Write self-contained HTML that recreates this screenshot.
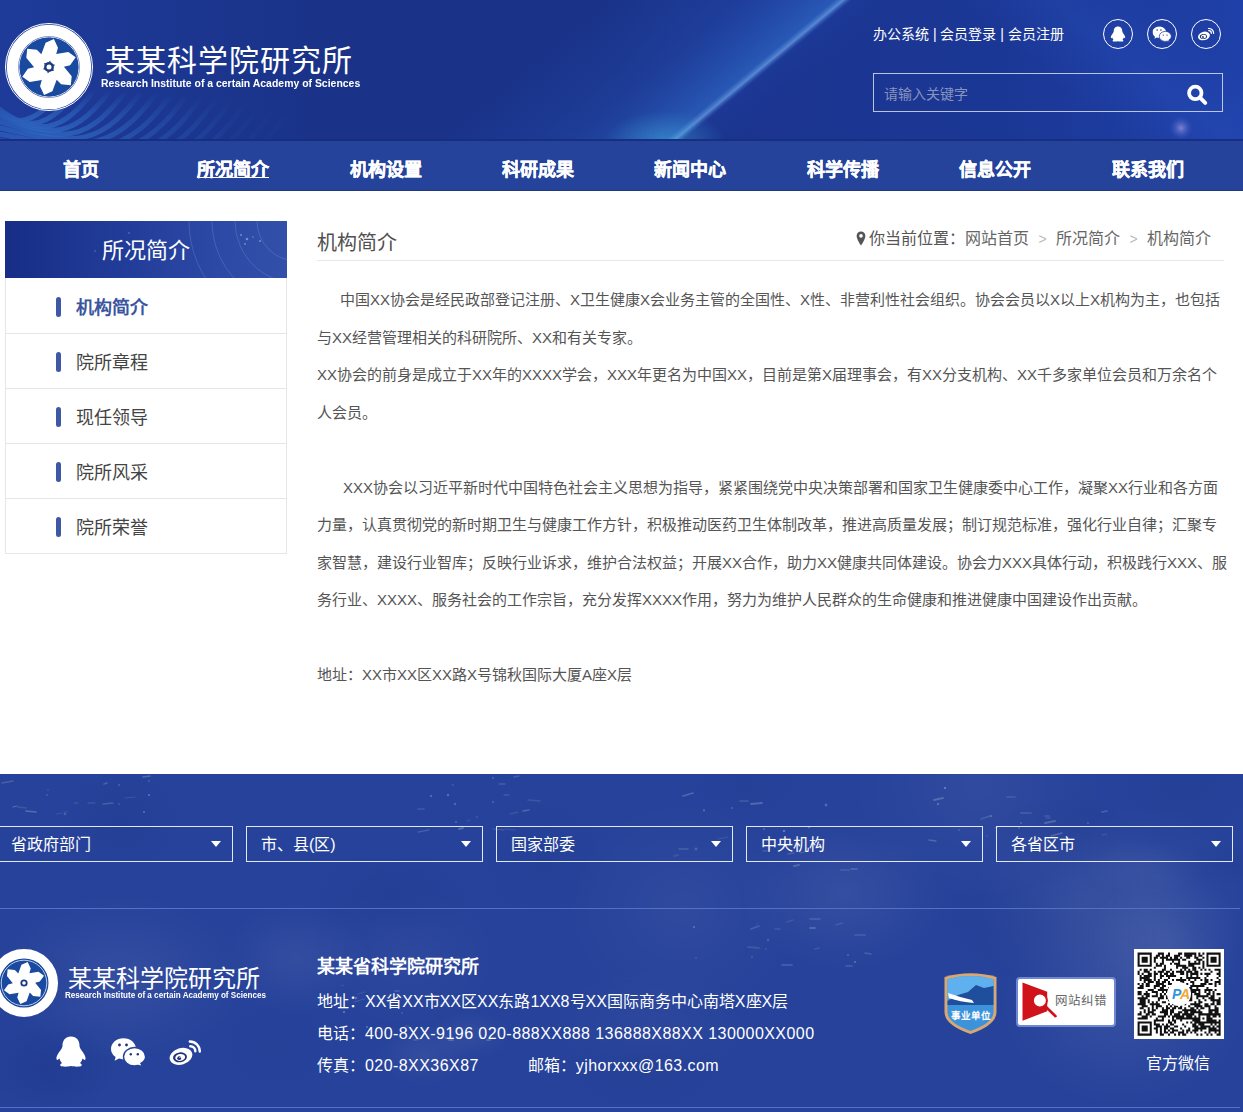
<!DOCTYPE html>
<html lang="zh-CN"><head><meta charset="utf-8">
<style>
*{margin:0;padding:0;box-sizing:border-box}
html,body{width:1243px;height:1112px;overflow:hidden;background:#fff}
body{font-family:"Liberation Sans",sans-serif;position:relative;color:#555}
.abs{position:absolute;white-space:nowrap}
#hdr{position:absolute;left:0;top:0;width:1243px;height:141px;overflow:hidden;background:#1b3591}
#nav{position:absolute;left:0;top:141px;width:1243px;height:50px;background:#25439b;border-bottom:1px solid #21387a}
#nav a{position:absolute;top:6px;-webkit-text-stroke:0.35px #fff;height:46px;line-height:46px;width:152px;text-align:center;color:#fff;font-size:18px;font-weight:bold;text-decoration:none}
#foot{position:absolute;left:0;top:774px;width:1243px;height:338px;background:#26429a;overflow:hidden}
.it{position:absolute;left:0;width:282px;height:55px;border-bottom:1px solid #e6e6e6;line-height:55px}
.it i{position:absolute;left:51px;top:18px;width:5px;height:20px;border-radius:3px;background:#3e58a6}
.it b{position:absolute;left:71px;top:2px;font-weight:normal;font-size:18px;color:#444}
#txt div{white-space:nowrap;height:37.5px}
.sel{position:absolute;top:52px;width:237px;height:36px;border:1.5px solid #e3e8f5;color:#fff;font-size:16px;line-height:35px;padding-left:14px}
.sel i{position:absolute;right:11px;top:14px;width:0;height:0;border-left:5px solid transparent;border-right:5px solid transparent;border-top:6px solid #fff}
.ic{position:absolute;top:19px;width:30px;height:30px;border:1.5px solid #fff;border-radius:50%}
.ic svg{position:absolute;left:50%;top:50%;transform:translate(-50%,-50%)}
</style></head><body>
<svg width="0" height="0" style="position:absolute">
 <defs>
  <symbol id="flower" viewBox="-30 -30 60 60"><path fill="#fff" d="M-7.67,-12.77 L-3.41,-24.26 L4.93,-27.97 L8.96,-19.21 L7.22,-13.03 L19.31,-15.08 L26.69,-9.71 L21.12,-1.85 L14.90,-0.26 L22.72,9.18 L21.76,18.26 L12.16,17.37 L7.67,12.77 L3.41,24.26 L-4.93,27.97 L-8.96,19.21 L-7.22,13.03 L-19.31,15.08 L-26.69,9.71 L-21.12,1.85 L-14.90,0.26 L-22.72,-9.18 L-21.76,-18.26 L-12.16,-17.37Z"/></symbol>
  <g id="qq"><path fill="#fff" d="M15,0.5C9,0.5 6.5,5 6.5,9.5C6.5,11 6,12 5,13.5C3,16.5 0,20 0.5,23C0.8,24.5 2,24 3.5,22.5C4,24.5 5,26 6,27C4.5,27.8 3.8,28.8 4.5,29.8C5.8,31 12,30.8 15,30C18,30.8 24.2,31 25.5,29.8C26.2,28.8 25.5,27.8 24,27C25,26 26,24.5 26.5,22.5C28,24 29.2,24.5 29.5,23C30,20 27,16.5 25,13.5C24,12 23.5,11 23.5,9.5C23.5,5 21,0.5 15,0.5Z"/></g>
  <g id="wx"><path fill="#fff" d="M12.5,0.3C5.6,0.3 0,5 0,10.9C0,14.2 1.8,17.1 4.6,19.1L3.6,22.8L8,20.6C9.4,21.1 10.9,21.4 12.5,21.4C19.4,21.4 25,16.7 25,10.9C25,5 19.4,0.3 12.5,0.3Z"/><path fill="#fff" stroke="#26429a" stroke-width="1.4" d="M23.5,9.5C17.4,9.5 12.5,13.6 12.5,18.7C12.5,23.8 17.4,27.9 23.5,27.9C24.7,27.9 25.8,27.7 26.9,27.4L31.5,28.5L29.9,25.3C32.8,23.6 34.6,21.3 34.6,18.7C34.6,13.6 29.6,9.5 23.5,9.5Z"/><circle cx="8.5" cy="7" r="1.4" fill="#1e3276"/><circle cx="15.5" cy="7" r="1.4" fill="#1e3276"/><circle cx="19.8" cy="16.2" r="1.2" fill="#1e3276"/><circle cx="26.8" cy="16.2" r="1.2" fill="#1e3276"/></g>
  <g id="wb"><ellipse cx="12" cy="16.4" rx="11.6" ry="8.2" transform="rotate(-17 12 16.4)" fill="#fff"/><ellipse cx="11" cy="17.3" rx="7" ry="4.9" transform="rotate(-8 11 17.3)" fill="#1e3276"/><ellipse cx="11.2" cy="17.5" rx="5" ry="3.4" transform="rotate(-8 11 17.3)" fill="#fff"/><circle cx="10.2" cy="18.2" r="1.9" fill="#1e3276"/><circle cx="10.9" cy="17.5" r="0.6" fill="#fff"/><path fill="none" stroke="#fff" stroke-width="2.4" stroke-linecap="round" d="M20.8,1.5A10,10 0 0 1 30.8,11.5M21.3,6.2A5,5 0 0 1 26.3,11.2"/></g>
 </defs>
</svg>

<div id="hdr">
 <svg class="abs" style="left:0;top:0" width="1243" height="141">
  <defs>
   <linearGradient id="hg" x1="0" y1="0" x2="1" y2="0">
    <stop offset="0" stop-color="#1e3b9a"/><stop offset="0.25" stop-color="#1a3389"/><stop offset="0.5" stop-color="#1a3389"/><stop offset="0.62" stop-color="#1b3590"/><stop offset="0.8" stop-color="#1b3795"/><stop offset="1" stop-color="#1f40a8"/>
   </linearGradient>
   <linearGradient id="beam" x1="0" y1="1" x2="1" y2="0">
    <stop offset="0" stop-color="#2a7ad8" stop-opacity="0"/><stop offset="0.45" stop-color="#3d8fe8" stop-opacity="0.55"/><stop offset="0.55" stop-color="#5aaaf0" stop-opacity="0.6"/><stop offset="1" stop-color="#2a6ad0" stop-opacity="0"/>
   </linearGradient>
   <linearGradient id="beam2" gradientUnits="userSpaceOnUse" x1="663" y1="-45" x2="784" y2="101">
    <stop offset="0" stop-color="#2a60d0" stop-opacity="0"/><stop offset="0.45" stop-color="#2f6ad8" stop-opacity="0.18"/><stop offset="0.76" stop-color="#3a88e8" stop-opacity="0.42"/><stop offset="0.79" stop-color="#80c0ff" stop-opacity="0.6"/><stop offset="0.82" stop-color="#2a5ad0" stop-opacity="0.1"/><stop offset="1" stop-color="#2050c0" stop-opacity="0"/>
   </linearGradient>
   <linearGradient id="band" gradientUnits="userSpaceOnUse" x1="1080" y1="-60" x2="1000" y2="40">
    <stop offset="0" stop-color="#3060d8" stop-opacity="0"/><stop offset="0.5" stop-color="#3468e0" stop-opacity="0.14"/><stop offset="1" stop-color="#3060d8" stop-opacity="0"/>
   </linearGradient>
   <radialGradient id="cyan" cx="0.5" cy="0.5" r="0.5"><stop offset="0" stop-color="#40b0e0" stop-opacity="0.45"/><stop offset="1" stop-color="#40b0e0" stop-opacity="0"/></radialGradient>
   <radialGradient id="glow" cx="0.5" cy="0.5" r="0.5"><stop offset="0" stop-color="#b8a8e8" stop-opacity="0.9"/><stop offset="1" stop-color="#4060d0" stop-opacity="0"/></radialGradient>
   <radialGradient id="wmg" cx="0.1" cy="1" r="1"><stop offset="0" stop-color="#fff"/><stop offset="0.6" stop-color="#fff" stop-opacity="0.5"/><stop offset="1" stop-color="#fff" stop-opacity="0"/></radialGradient><mask id="wm"><rect x="0" y="88" width="320" height="53" fill="url(#wmg)"/></mask><linearGradient id="waves" x1="0" y1="0" x2="0" y2="1"><stop offset="0" stop-color="#3b7fd0" stop-opacity="0"/><stop offset="1" stop-color="#4a8ad8" stop-opacity="0.7"/></linearGradient>
  </defs>
  <rect width="1243" height="141" fill="url(#hg)"/>
  <rect width="1243" height="141" fill="url(#beam2)"/>
  <rect width="1243" height="141" fill="url(#band)"/>
  <ellipse cx="665" cy="141" rx="60" ry="30" fill="url(#cyan)"/>
  <circle cx="1181" cy="128" r="12" fill="url(#glow)" opacity="0.7"/>
  <g fill="none" stroke="#3270c8" stroke-width="5" mask="url(#wm)"><path d="M-20,88 C0,113 20,150 70,80" stroke-opacity="1.00"/><path d="M-20,95 C16,120 36,150 86,80" stroke-opacity="0.94"/><path d="M-20,102 C32,127 52,150 102,80" stroke-opacity="0.88"/><path d="M-20,109 C48,134 68,150 118,80" stroke-opacity="0.81"/><path d="M-20,116 C64,141 84,150 134,80" stroke-opacity="0.75"/><path d="M-20,123 C80,148 100,150 150,80" stroke-opacity="0.69"/><path d="M-20,130 C96,155 116,150 166,80" stroke-opacity="0.62"/><path d="M-20,137 C112,162 132,150 182,80" stroke-opacity="0.56"/><path d="M-20,144 C128,169 148,150 198,80" stroke-opacity="0.50"/><path d="M-20,151 C144,176 164,150 214,80" stroke-opacity="0.44"/><path d="M-20,158 C160,183 180,150 230,80" stroke-opacity="0.38"/><path d="M-20,165 C176,190 196,150 246,80" stroke-opacity="0.31"/><path d="M-20,172 C192,197 212,150 262,80" stroke-opacity="0.25"/><path d="M-20,179 C208,204 228,150 278,80" stroke-opacity="0.19"/><path d="M-20,186 C224,211 244,150 294,80" stroke-opacity="0.15"/><path d="M-20,193 C240,218 260,150 310,80" stroke-opacity="0.15"/></g>
 </svg>
 <svg class="abs" style="left:5px;top:23px" width="88" height="88" viewBox="-44 -44 88 88">
  <circle r="43.5" fill="none" stroke="#fff" stroke-width="1"/>
  <circle r="36.5" fill="none" stroke="#fff" stroke-width="11.5"/>
  <circle r="30" fill="#1a4aa0" stroke="#fff" stroke-width="0.8"/>
  <circle r="29.2" fill="#1a4aa0"/>
  <use href="#flower" x="-30" y="-30" width="60" height="60"/>
  <g fill="#1b3a80"><circle r="4.9"/><path d="M0,-6.3L1.3,-4.5L-1.3,-4.5Z" transform="rotate(10)"/><path d="M0,-6.3L1.3,-4.5L-1.3,-4.5Z" transform="rotate(70)"/><path d="M0,-6.3L1.3,-4.5L-1.3,-4.5Z" transform="rotate(130)"/><path d="M0,-6.3L1.3,-4.5L-1.3,-4.5Z" transform="rotate(190)"/><path d="M0,-6.3L1.3,-4.5L-1.3,-4.5Z" transform="rotate(250)"/><path d="M0,-6.3L1.3,-4.5L-1.3,-4.5Z" transform="rotate(310)"/></g><circle r="2.5" fill="#fff"/>
 </svg>
 <div class="abs" style="left:105px;top:43px;font-size:30px;color:#fff;line-height:36px;letter-spacing:1px;font-weight:300">某某科学院研究所</div>
 <div class="abs" style="left:101px;top:76px;font-size:11px;font-weight:bold;color:#fff;line-height:14px;transform-origin:0 0;transform:scaleX(0.95)">Research Institute of a certain Academy of Sciences</div>

 <div class="abs" style="left:873px;top:24px;font-size:14px;color:#fff;line-height:20px">办公系统 | 会员登录 | 会员注册</div>
 <div class="ic" style="left:1103px"><svg width="15" height="17" viewBox="0 0 30 31"><use href="#qq"/></svg></div>
 <div class="ic" style="left:1147px"><svg width="19" height="15.5" viewBox="0 0 35 28.5"><use href="#wx"/></svg></div>
 <div class="ic" style="left:1191px"><svg width="17" height="13" viewBox="0 0 32 25"><use href="#wb"/></svg></div>

 <div class="abs" style="left:873px;top:73px;width:350px;height:39px;border:1px solid rgba(255,255,255,0.7)"></div>
 <div class="abs" style="left:884px;top:84px;font-size:14px;color:#8794bd;line-height:20px">请输入关键字</div>
 <svg class="abs" style="left:1180px;top:78px" width="32" height="32" viewBox="1180 78 32 32"><circle cx="1195.3" cy="92.9" r="6.2" fill="none" stroke="#fff" stroke-width="3.8"/><path d="M1200.5,98.2L1205.2,102.9" stroke="#fff" stroke-width="4" stroke-linecap="round"/></svg>
</div>

<div class="abs" style="left:0;top:139px;width:1243px;height:2px;background:#172f80"></div>
<div id="nav">
 <a style="left:5px">首页</a>
 <a style="left:157px;text-decoration:underline">所况简介</a>
 <a style="left:310px">机构设置</a>
 <a style="left:462px">科研成果</a>
 <a style="left:614px">新闻中心</a>
 <a style="left:767px">科学传播</a>
 <a style="left:919px">信息公开</a>
 <a style="left:1072px">联系我们</a>
</div>

<div id="side" class="abs" style="left:5px;top:221px;width:282px;height:333px">
 <div style="position:absolute;left:0;top:0;width:282px;height:57px;background:linear-gradient(90deg,#172d86 0%,#213c98 40%,#2c49a5 75%,#3250aa 100%);overflow:hidden">
  <svg style="position:absolute;left:0;top:0" width="282" height="57"><g fill="none" stroke="#fff" stroke-opacity="0.13" stroke-width="1"><circle cx="292" cy="0" r="40"/><circle cx="292" cy="0" r="62"/><circle cx="292" cy="0" r="85"/><circle cx="292" cy="0" r="108"/></g><g fill="#fff" opacity="0.35"><circle cx="236" cy="14" r="1"/><circle cx="242" cy="18" r="1.3"/><circle cx="248" cy="16" r="0.8"/><circle cx="240" cy="23" r="0.9"/><circle cx="255" cy="20" r="1"/><circle cx="124" cy="12" r="0.8"/><circle cx="90" cy="30" r="0.7"/></g></svg>
  <div style="position:absolute;left:0;top:0;width:282px;height:57px;color:#fff;font-size:22px;line-height:59px;text-align:center">所况简介</div>
 </div>
 <div style="position:absolute;left:0;top:57px;width:282px;height:276px;border:1px solid #e6e6e6;border-top:none"></div>
 <div class="it" style="top:58px"><i></i><b style="color:#3b559f;font-weight:bold">机构简介</b></div>
 <div class="it" style="top:113px"><i></i><b>院所章程</b></div>
 <div class="it" style="top:168px"><i></i><b>现任领导</b></div>
 <div class="it" style="top:223px"><i></i><b>院所风采</b></div>
 <div class="it" style="top:278px;height:54px;border-bottom:none"><i></i><b>院所荣誉</b></div>
</div>

<div class="abs" style="left:317px;top:230px;font-size:20px;color:#505050;line-height:26px">机构简介</div>
<svg class="abs" style="left:856px;top:231px" width="10" height="15" viewBox="0 0 10 15"><path fill="#555" d="M5,0.5C2.4,0.5 0.6,2.4 0.6,4.9 0.6,8 5,14.5 5,14.5 5,14.5 9.4,8 9.4,4.9 9.4,2.4 7.6,0.5 5,0.5Z M5,3.1A1.8,1.8 0 1 0 5,6.7 1.8,1.8 0 1 0 5,3.1Z" fill-rule="evenodd"/></svg>
<div class="abs" style="left:869px;top:228px;font-size:16px;color:#555;line-height:22px">你当前位置：<span style="color:#666">网站首页</span><span style="color:#bbb;display:inline-block;width:27px;text-align:center;font-size:14px">&gt;</span><span style="color:#666">所况简介</span><span style="color:#bbb;display:inline-block;width:27px;text-align:center;font-size:14px">&gt;</span><span style="color:#666">机构简介</span></div>
<div class="abs" style="left:317px;top:260px;width:907px;height:1px;background:#e8e8e8"></div>

<div id="txt" class="abs" style="left:317px;top:281px;font-size:15px;color:#555;line-height:37.5px">
<div style="padding-left:23px">中国XX协会是经民政部登记注册、X卫生健康X会业务主管的全国性、X性、非营利性社会组织。协会会员以X以上X机构为主，也包括</div>
<div>与XX经营管理相关的科研院所、XX和有关专家。</div>
<div>XX协会的前身是成立于XX年的XXXX学会，XXX年更名为中国XX，目前是第X届理事会，有XX分支机构、XX千多家单位会员和万余名个</div>
<div>人会员。</div>
<div>&nbsp;</div>
<div style="padding-left:26px">XXX协会以习近平新时代中国特色社会主义思想为指导，紧紧围绕党中央决策部署和国家卫生健康委中心工作，凝聚XX行业和各方面</div>
<div>力量，认真贯彻党的新时期卫生与健康工作方针，积极推动医药卫生体制改革，推进高质量发展；制订规范标准，强化行业自律；汇聚专</div>
<div>家智慧，建设行业智库；反映行业诉求，维护合法权益；开展XX合作，助力XX健康共同体建设。协会力XXX具体行动，积极践行XXX、服</div>
<div>务行业、XXXX、服务社会的工作宗旨，充分发挥XXXX作用，努力为维护人民群众的生命健康和推进健康中国建设作出贡献。</div>
<div>&nbsp;</div>
<div>地址：XX市XX区XX路X号锦秋国际大厦A座X层</div>
</div>

<div id="foot">
 <svg class="abs" style="left:0;top:0" width="1243" height="338"><defs><radialGradient id="bl"><stop offset="0" stop-color="#fff" stop-opacity="1"/><stop offset="1" stop-color="#fff" stop-opacity="0"/></radialGradient><radialGradient id="bd"><stop offset="0" stop-color="#061a60" stop-opacity="1"/><stop offset="1" stop-color="#061a60" stop-opacity="0"/></radialGradient></defs><ellipse cx="296" cy="184" rx="73" ry="56" fill="url(#bl)" opacity="0.060"/><ellipse cx="1130" cy="159" rx="90" ry="65" fill="url(#bd)" opacity="0.040"/><ellipse cx="683" cy="134" rx="117" ry="108" fill="url(#bl)" opacity="0.042"/><ellipse cx="650" cy="251" rx="100" ry="58" fill="url(#bl)" opacity="0.033"/><ellipse cx="39" cy="293" rx="83" ry="68" fill="url(#bd)" opacity="0.066"/><ellipse cx="1145" cy="133" rx="112" ry="104" fill="url(#bl)" opacity="0.052"/><ellipse cx="121" cy="46" rx="60" ry="52" fill="url(#bd)" opacity="0.078"/><ellipse cx="1063" cy="142" rx="115" ry="86" fill="url(#bd)" opacity="0.059"/><ellipse cx="1124" cy="231" rx="124" ry="101" fill="url(#bl)" opacity="0.073"/><ellipse cx="406" cy="183" rx="91" ry="71" fill="url(#bl)" opacity="0.035"/><ellipse cx="1228" cy="90" rx="51" ry="23" fill="url(#bd)" opacity="0.054"/><ellipse cx="995" cy="139" rx="54" ry="49" fill="url(#bd)" opacity="0.045"/><ellipse cx="55" cy="208" rx="44" ry="32" fill="url(#bd)" opacity="0.066"/><ellipse cx="1146" cy="94" rx="61" ry="27" fill="url(#bl)" opacity="0.032"/><ellipse cx="746" cy="11" rx="58" ry="29" fill="url(#bd)" opacity="0.050"/><ellipse cx="53" cy="293" rx="68" ry="43" fill="url(#bd)" opacity="0.078"/><ellipse cx="1081" cy="131" rx="118" ry="91" fill="url(#bl)" opacity="0.064"/><ellipse cx="1169" cy="171" rx="79" ry="76" fill="url(#bl)" opacity="0.066"/><ellipse cx="544" cy="87" rx="67" ry="67" fill="url(#bd)" opacity="0.047"/><ellipse cx="391" cy="127" rx="93" ry="63" fill="url(#bd)" opacity="0.037"/><ellipse cx="844" cy="119" rx="104" ry="78" fill="url(#bl)" opacity="0.067"/><ellipse cx="1187" cy="7" rx="73" ry="55" fill="url(#bd)" opacity="0.061"/><ellipse cx="398" cy="123" rx="68" ry="40" fill="url(#bd)" opacity="0.048"/><ellipse cx="469" cy="261" rx="42" ry="25" fill="url(#bl)" opacity="0.058"/><ellipse cx="277" cy="272" rx="61" ry="49" fill="url(#bd)" opacity="0.039"/><ellipse cx="121" cy="203" rx="125" ry="83" fill="url(#bl)" opacity="0.064"/><ellipse cx="1063" cy="57" rx="70" ry="40" fill="url(#bd)" opacity="0.063"/><ellipse cx="978" cy="11" rx="126" ry="116" fill="url(#bl)" opacity="0.046"/><ellipse cx="423" cy="280" rx="48" ry="31" fill="url(#bl)" opacity="0.061"/><ellipse cx="644" cy="287" rx="82" ry="53" fill="url(#bd)" opacity="0.062"/><line x1="459" y1="55" x2="463" y2="54" stroke="#fff" stroke-opacity="0.21" stroke-width="1.9" stroke-linecap="round"/><line x1="528" y1="26" x2="540" y2="27" stroke="#fff" stroke-opacity="0.11" stroke-width="1.7" stroke-linecap="round"/><line x1="510" y1="40" x2="518" y2="38" stroke="#fff" stroke-opacity="0.13" stroke-width="1.2" stroke-linecap="round"/><line x1="418" y1="35" x2="424" y2="35" stroke="#fff" stroke-opacity="0.09" stroke-width="1.9" stroke-linecap="round"/><line x1="493" y1="55" x2="504" y2="56" stroke="#fff" stroke-opacity="0.16" stroke-width="1.0" stroke-linecap="round"/><line x1="499" y1="10" x2="505" y2="10" stroke="#fff" stroke-opacity="0.15" stroke-width="1.4" stroke-linecap="round"/><line x1="523" y1="37" x2="529" y2="36" stroke="#fff" stroke-opacity="0.20" stroke-width="1.5" stroke-linecap="round"/><line x1="504" y1="21" x2="509" y2="21" stroke="#fff" stroke-opacity="0.19" stroke-width="1.2" stroke-linecap="round"/><line x1="505" y1="55" x2="515" y2="56" stroke="#fff" stroke-opacity="0.08" stroke-width="1.6" stroke-linecap="round"/><line x1="514" y1="3" x2="519" y2="2" stroke="#fff" stroke-opacity="0.15" stroke-width="1.4" stroke-linecap="round"/><line x1="467" y1="47" x2="470" y2="46" stroke="#fff" stroke-opacity="0.10" stroke-width="1.1" stroke-linecap="round"/><line x1="418" y1="58" x2="429" y2="56" stroke="#fff" stroke-opacity="0.15" stroke-width="1.3" stroke-linecap="round"/><circle cx="448" cy="21" r="1.2" fill="#fff" opacity="0.23"/><circle cx="453" cy="11" r="0.9" fill="#fff" opacity="0.14"/><circle cx="477" cy="43" r="1.0" fill="#fff" opacity="0.13"/><circle cx="431" cy="22" r="1.1" fill="#fff" opacity="0.26"/><circle cx="456" cy="48" r="1.1" fill="#fff" opacity="0.20"/><circle cx="455" cy="30" r="1.2" fill="#fff" opacity="0.20"/><circle cx="493" cy="28" r="0.9" fill="#fff" opacity="0.22"/><circle cx="493" cy="4" r="1.0" fill="#fff" opacity="0.20"/><line x1="851" y1="95" x2="857" y2="95" stroke="#fff" stroke-opacity="0.19" stroke-width="1.3" stroke-linecap="round"/><line x1="751" y1="30" x2="762" y2="29" stroke="#fff" stroke-opacity="0.20" stroke-width="1.8" stroke-linecap="round"/><line x1="800" y1="79" x2="808" y2="77" stroke="#fff" stroke-opacity="0.16" stroke-width="1.0" stroke-linecap="round"/><line x1="674" y1="82" x2="678" y2="81" stroke="#fff" stroke-opacity="0.09" stroke-width="1.9" stroke-linecap="round"/><line x1="683" y1="22" x2="693" y2="19" stroke="#fff" stroke-opacity="0.20" stroke-width="1.7" stroke-linecap="round"/><line x1="841" y1="96" x2="849" y2="96" stroke="#fff" stroke-opacity="0.09" stroke-width="1.8" stroke-linecap="round"/><line x1="763" y1="77" x2="767" y2="77" stroke="#fff" stroke-opacity="0.21" stroke-width="1.1" stroke-linecap="round"/><line x1="718" y1="65" x2="728" y2="63" stroke="#fff" stroke-opacity="0.11" stroke-width="1.2" stroke-linecap="round"/><line x1="788" y1="80" x2="794" y2="79" stroke="#fff" stroke-opacity="0.14" stroke-width="1.4" stroke-linecap="round"/><line x1="740" y1="27" x2="748" y2="27" stroke="#fff" stroke-opacity="0.14" stroke-width="1.7" stroke-linecap="round"/><line x1="679" y1="75" x2="688" y2="75" stroke="#fff" stroke-opacity="0.15" stroke-width="1.5" stroke-linecap="round"/><line x1="794" y1="92" x2="799" y2="91" stroke="#fff" stroke-opacity="0.18" stroke-width="1.9" stroke-linecap="round"/><circle cx="764" cy="55" r="1.2" fill="#fff" opacity="0.15"/><circle cx="704" cy="36" r="1.1" fill="#fff" opacity="0.18"/><circle cx="696" cy="75" r="1.4" fill="#fff" opacity="0.17"/><circle cx="809" cy="53" r="1.3" fill="#fff" opacity="0.23"/><circle cx="704" cy="37" r="0.7" fill="#fff" opacity="0.21"/><circle cx="732" cy="34" r="1.0" fill="#fff" opacity="0.18"/><circle cx="826" cy="31" r="1.4" fill="#fff" opacity="0.21"/><circle cx="784" cy="57" r="1.3" fill="#fff" opacity="0.27"/><line x1="1021" y1="39" x2="1031" y2="39" stroke="#fff" stroke-opacity="0.14" stroke-width="1.7" stroke-linecap="round"/><line x1="1102" y1="38" x2="1107" y2="37" stroke="#fff" stroke-opacity="0.18" stroke-width="1.7" stroke-linecap="round"/><line x1="1102" y1="61" x2="1107" y2="60" stroke="#fff" stroke-opacity="0.12" stroke-width="1.2" stroke-linecap="round"/><line x1="1051" y1="62" x2="1062" y2="59" stroke="#fff" stroke-opacity="0.20" stroke-width="1.3" stroke-linecap="round"/><line x1="995" y1="54" x2="998" y2="53" stroke="#fff" stroke-opacity="0.20" stroke-width="1.3" stroke-linecap="round"/><line x1="981" y1="45" x2="990" y2="42" stroke="#fff" stroke-opacity="0.13" stroke-width="1.4" stroke-linecap="round"/><line x1="1007" y1="23" x2="1015" y2="23" stroke="#fff" stroke-opacity="0.13" stroke-width="1.5" stroke-linecap="round"/><line x1="934" y1="26" x2="943" y2="24" stroke="#fff" stroke-opacity="0.20" stroke-width="1.9" stroke-linecap="round"/><line x1="929" y1="66" x2="936" y2="67" stroke="#fff" stroke-opacity="0.19" stroke-width="1.3" stroke-linecap="round"/><line x1="1045" y1="49" x2="1055" y2="47" stroke="#fff" stroke-opacity="0.19" stroke-width="2.0" stroke-linecap="round"/><line x1="1045" y1="42" x2="1049" y2="42" stroke="#fff" stroke-opacity="0.13" stroke-width="1.7" stroke-linecap="round"/><line x1="1046" y1="44" x2="1050" y2="44" stroke="#fff" stroke-opacity="0.17" stroke-width="1.2" stroke-linecap="round"/><circle cx="1088" cy="49" r="0.8" fill="#fff" opacity="0.29"/><circle cx="938" cy="30" r="1.2" fill="#fff" opacity="0.23"/><circle cx="1021" cy="49" r="1.0" fill="#fff" opacity="0.18"/><circle cx="945" cy="14" r="1.2" fill="#fff" opacity="0.26"/><circle cx="1019" cy="54" r="1.0" fill="#fff" opacity="0.17"/><circle cx="987" cy="62" r="0.7" fill="#fff" opacity="0.21"/><circle cx="959" cy="56" r="0.9" fill="#fff" opacity="0.18"/><circle cx="991" cy="42" r="1.2" fill="#fff" opacity="0.18"/><line x1="836" y1="151" x2="842" y2="149" stroke="#fff" stroke-opacity="0.10" stroke-width="1.8" stroke-linecap="round"/><line x1="810" y1="154" x2="815" y2="154" stroke="#fff" stroke-opacity="0.18" stroke-width="1.8" stroke-linecap="round"/><line x1="815" y1="175" x2="819" y2="174" stroke="#fff" stroke-opacity="0.11" stroke-width="1.5" stroke-linecap="round"/><line x1="775" y1="155" x2="780" y2="155" stroke="#fff" stroke-opacity="0.08" stroke-width="1.8" stroke-linecap="round"/><line x1="846" y1="192" x2="852" y2="192" stroke="#fff" stroke-opacity="0.16" stroke-width="1.6" stroke-linecap="round"/><line x1="865" y1="179" x2="871" y2="180" stroke="#fff" stroke-opacity="0.15" stroke-width="1.6" stroke-linecap="round"/><line x1="810" y1="145" x2="820" y2="145" stroke="#fff" stroke-opacity="0.15" stroke-width="1.5" stroke-linecap="round"/><line x1="751" y1="155" x2="759" y2="152" stroke="#fff" stroke-opacity="0.15" stroke-width="1.6" stroke-linecap="round"/><line x1="748" y1="173" x2="759" y2="174" stroke="#fff" stroke-opacity="0.10" stroke-width="1.8" stroke-linecap="round"/><line x1="787" y1="148" x2="793" y2="146" stroke="#fff" stroke-opacity="0.09" stroke-width="1.5" stroke-linecap="round"/><line x1="855" y1="161" x2="865" y2="161" stroke="#fff" stroke-opacity="0.10" stroke-width="1.9" stroke-linecap="round"/><line x1="782" y1="191" x2="792" y2="191" stroke="#fff" stroke-opacity="0.13" stroke-width="1.8" stroke-linecap="round"/><circle cx="855" cy="188" r="1.0" fill="#fff" opacity="0.26"/><circle cx="757" cy="150" r="0.7" fill="#fff" opacity="0.13"/><circle cx="694" cy="153" r="1.0" fill="#fff" opacity="0.25"/><circle cx="768" cy="166" r="1.2" fill="#fff" opacity="0.17"/><circle cx="752" cy="183" r="1.0" fill="#fff" opacity="0.15"/><circle cx="848" cy="181" r="1.0" fill="#fff" opacity="0.19"/><circle cx="766" cy="175" r="0.9" fill="#fff" opacity="0.12"/><circle cx="696" cy="184" r="0.8" fill="#fff" opacity="0.20"/><line x1="371" y1="223" x2="376" y2="222" stroke="#fff" stroke-opacity="0.10" stroke-width="1.0" stroke-linecap="round"/><line x1="358" y1="220" x2="365" y2="218" stroke="#fff" stroke-opacity="0.08" stroke-width="1.4" stroke-linecap="round"/><line x1="405" y1="252" x2="409" y2="252" stroke="#fff" stroke-opacity="0.14" stroke-width="1.0" stroke-linecap="round"/><line x1="494" y1="223" x2="498" y2="223" stroke="#fff" stroke-opacity="0.10" stroke-width="1.6" stroke-linecap="round"/><line x1="395" y1="217" x2="399" y2="217" stroke="#fff" stroke-opacity="0.12" stroke-width="1.8" stroke-linecap="round"/><line x1="414" y1="266" x2="420" y2="265" stroke="#fff" stroke-opacity="0.12" stroke-width="1.8" stroke-linecap="round"/><line x1="441" y1="231" x2="444" y2="231" stroke="#fff" stroke-opacity="0.22" stroke-width="1.6" stroke-linecap="round"/><line x1="341" y1="212" x2="344" y2="211" stroke="#fff" stroke-opacity="0.09" stroke-width="1.1" stroke-linecap="round"/><line x1="445" y1="264" x2="449" y2="264" stroke="#fff" stroke-opacity="0.15" stroke-width="1.8" stroke-linecap="round"/><line x1="487" y1="266" x2="490" y2="266" stroke="#fff" stroke-opacity="0.16" stroke-width="1.9" stroke-linecap="round"/><line x1="354" y1="228" x2="364" y2="225" stroke="#fff" stroke-opacity="0.13" stroke-width="1.3" stroke-linecap="round"/><line x1="449" y1="266" x2="453" y2="266" stroke="#fff" stroke-opacity="0.18" stroke-width="1.8" stroke-linecap="round"/><circle cx="429" cy="265" r="1.0" fill="#fff" opacity="0.19"/><circle cx="377" cy="257" r="1.0" fill="#fff" opacity="0.17"/><circle cx="367" cy="253" r="1.1" fill="#fff" opacity="0.25"/><circle cx="402" cy="239" r="0.8" fill="#fff" opacity="0.25"/><circle cx="344" cy="238" r="1.2" fill="#fff" opacity="0.24"/><circle cx="356" cy="224" r="1.3" fill="#fff" opacity="0.24"/><circle cx="481" cy="262" r="1.0" fill="#fff" opacity="0.28"/><circle cx="457" cy="230" r="1.0" fill="#fff" opacity="0.13"/><line x1="64" y1="38" x2="68" y2="38" stroke="#fff" stroke-opacity="0.10" stroke-width="1.1" stroke-linecap="round"/><line x1="104" y1="10" x2="107" y2="9" stroke="#fff" stroke-opacity="0.17" stroke-width="1.6" stroke-linecap="round"/><line x1="2" y1="9" x2="13" y2="7" stroke="#fff" stroke-opacity="0.16" stroke-width="1.4" stroke-linecap="round"/><line x1="125" y1="24" x2="135" y2="23" stroke="#fff" stroke-opacity="0.11" stroke-width="1.2" stroke-linecap="round"/><line x1="13" y1="33" x2="17" y2="32" stroke="#fff" stroke-opacity="0.22" stroke-width="1.2" stroke-linecap="round"/><line x1="143" y1="3" x2="150" y2="2" stroke="#fff" stroke-opacity="0.20" stroke-width="1.6" stroke-linecap="round"/><line x1="103" y1="30" x2="113" y2="29" stroke="#fff" stroke-opacity="0.16" stroke-width="1.4" stroke-linecap="round"/><line x1="18" y1="33" x2="26" y2="34" stroke="#fff" stroke-opacity="0.11" stroke-width="1.5" stroke-linecap="round"/><line x1="74" y1="29" x2="78" y2="29" stroke="#fff" stroke-opacity="0.15" stroke-width="1.1" stroke-linecap="round"/><line x1="88" y1="29" x2="95" y2="29" stroke="#fff" stroke-opacity="0.16" stroke-width="1.2" stroke-linecap="round"/><line x1="56" y1="40" x2="62" y2="39" stroke="#fff" stroke-opacity="0.09" stroke-width="1.2" stroke-linecap="round"/><line x1="26" y1="37" x2="36" y2="38" stroke="#fff" stroke-opacity="0.22" stroke-width="1.6" stroke-linecap="round"/><circle cx="149" cy="21" r="1.0" fill="#fff" opacity="0.29"/><circle cx="144" cy="38" r="1.0" fill="#fff" opacity="0.26"/><circle cx="65" cy="40" r="1.3" fill="#fff" opacity="0.17"/><circle cx="149" cy="7" r="0.8" fill="#fff" opacity="0.25"/><circle cx="47" cy="21" r="1.1" fill="#fff" opacity="0.13"/><circle cx="119" cy="11" r="1.0" fill="#fff" opacity="0.18"/><circle cx="119" cy="30" r="0.9" fill="#fff" opacity="0.14"/><circle cx="48" cy="16" r="0.8" fill="#fff" opacity="0.15"/></svg>
  <div class="sel" style="left:-4px">省政府部门<i></i></div>
 <div class="sel" style="left:246px">市、县(区)<i></i></div>
 <div class="sel" style="left:496px">国家部委<i></i></div>
 <div class="sel" style="left:746px">中央机构<i></i></div>
 <div class="sel" style="left:996px">各省区市<i></i></div>
 <div class="abs" style="left:0;top:134px;width:1240px;height:1px;background:#5073c8"></div>

 <svg class="abs" style="left:-10px;top:175px" width="68" height="68" viewBox="-34 -34 68 68">
  <circle r="29" fill="none" stroke="#fff" stroke-width="10"/>
  <circle r="24.5" fill="#1a4aa0"/>
  <circle r="22.8" fill="none" stroke="#fff" stroke-width="0.7"/>
  <use href="#flower" x="-22.5" y="-22.5" width="45" height="45"/>
  <circle r="3.6" fill="#1b3a80"/><circle r="1.8" fill="#fff"/>
 </svg>
 <div class="abs" style="left:68px;top:191px;font-size:24px;color:#fff;line-height:28px;font-weight:300;letter-spacing:0px">某某科学院研究所</div>
 <div class="abs" style="left:65px;top:216px;font-size:9px;font-weight:bold;color:#fff;line-height:11px;transform-origin:0 0;transform:scaleX(0.9)">Research Institute of a certain Academy of Sciences</div>
 <svg class="abs" style="left:56px;top:262px" width="30" height="31" viewBox="0 0 30 31"><use href="#qq"/></svg>
 <svg class="abs" style="left:111px;top:264px" width="35" height="28.5" viewBox="0 0 35 28.5"><use href="#wx"/></svg>
 <svg class="abs" style="left:169px;top:266px" width="32" height="25" viewBox="0 0 32 25"><use href="#wb"/></svg>

 <div class="abs" style="left:317px;top:181px;font-size:18px;font-weight:bold;color:#fff;line-height:24px">某某省科学院研究所</div>
 <div class="abs" style="left:317px;top:212px;font-size:16px;color:#fff;line-height:32px">地址：XX省XX市XX区XX东路1XX8号XX国际商务中心南塔X座X层<br>电话：<span style="letter-spacing:0.44px">400-8XX-9196 020-888XX888 136888X88XX 130000XX000</span><br>传真：<span style="letter-spacing:0.44px">020-8XX36X87</span><span style="display:inline-block;width:49px"></span>邮箱：<span style="letter-spacing:0.44px">yjhorxxx@163.com</span></div>

 <svg class="abs" style="left:944px;top:197px" width="53" height="63" viewBox="0 0 53 63">
  <path d="M0.5,6 Q26.5,-1.5 52.5,6 L52.5,41 Q52.5,54 26.5,63 Q0.5,54 0.5,41Z" fill="#d8a772"/>
  <path d="M3.5,8.3 Q26.5,1.8 49.5,8.3 L49.5,41 Q49.5,52 26.5,60 Q3.5,52 3.5,41Z" fill="#3d92dc"/>
  <path d="M3.5,8.3 Q26.5,1.8 49.5,8.3 L49.5,28 L3.5,28Z" fill="#5fb0ee"/>
  <path d="M3.5,30 L14,24 L24,21 L32,14 L40,17 L49.5,15 L49.5,34 L3.5,34Z" fill="#1f4f9c"/>
  <path d="M4,22 Q15,26 28,29 L30,32 Q16,31 5,27Z" fill="#fff"/>
  <text x="26.5" y="48" fill="#fff" font-size="9.5" font-weight="bold" text-anchor="middle">事业单位</text>
 </svg>
 <div class="abs" style="left:1016px;top:203px;width:100px;height:50px;background:#fff;border:2px solid #7088d2;border-radius:4px"></div>
 <svg class="abs" style="left:1016px;top:203px" width="100" height="50" viewBox="0 0 100 50"><path d="M6.5,5.4 L31.2,14.8 L31.2,34.3 L6.5,43.7Z" fill="#d0121b"/><circle cx="23.9" cy="23.5" r="7" fill="#fff" stroke="#d0121b" stroke-width="2"/><path d="M29,29 L39.5,39.2" stroke="#d0121b" stroke-width="2.6" stroke-linecap="round"/></svg>
 <div class="abs" style="left:1055px;top:218px;font-size:12.5px;color:#666;line-height:18px">网站纠错</div>
 <svg class="abs" style="left:1134px;top:175px" width="90" height="90" viewBox="0 0 90 90"><rect width="90" height="90" fill="#fff"/><g transform="translate(3.6,3.6) scale(2.025)"><path d="M0 0h7v1h-7zM10 0h3v1h-3zM15 0h1v1h-1zM20 0h2v1h-2zM23 0h6v1h-6zM30 0h1v1h-1zM32 0h1v1h-1zM34 0h7v1h-7zM0 1h1v1h-1zM6 1h1v1h-1zM9 1h2v1h-2zM12 1h1v1h-1zM14 1h2v1h-2zM18 1h3v1h-3zM23 1h4v1h-4zM28 1h1v1h-1zM30 1h2v1h-2zM34 1h1v1h-1zM40 1h1v1h-1zM0 2h1v1h-1zM2 2h3v1h-3zM6 2h1v1h-1zM8 2h2v1h-2zM11 2h4v1h-4zM16 2h1v1h-1zM18 2h2v1h-2zM21 2h1v1h-1zM24 2h2v1h-2zM28 2h2v1h-2zM32 2h1v1h-1zM34 2h1v1h-1zM36 2h3v1h-3zM40 2h1v1h-1zM0 3h1v1h-1zM2 3h3v1h-3zM6 3h1v1h-1zM8 3h1v1h-1zM12 3h1v1h-1zM14 3h7v1h-7zM22 3h2v1h-2zM29 3h3v1h-3zM34 3h1v1h-1zM36 3h3v1h-3zM40 3h1v1h-1zM0 4h1v1h-1zM2 4h3v1h-3zM6 4h1v1h-1zM8 4h1v1h-1zM12 4h1v1h-1zM17 4h1v1h-1zM20 4h1v1h-1zM25 4h1v1h-1zM28 4h1v1h-1zM30 4h1v1h-1zM32 4h1v1h-1zM34 4h1v1h-1zM36 4h3v1h-3zM40 4h1v1h-1zM0 5h1v1h-1zM6 5h1v1h-1zM9 5h1v1h-1zM11 5h2v1h-2zM16 5h1v1h-1zM18 5h3v1h-3zM25 5h6v1h-6zM32 5h1v1h-1zM34 5h1v1h-1zM40 5h1v1h-1zM0 6h7v1h-7zM9 6h3v1h-3zM13 6h1v1h-1zM19 6h5v1h-5zM25 6h3v1h-3zM32 6h1v1h-1zM34 6h7v1h-7zM8 7h1v1h-1zM13 7h1v1h-1zM19 7h1v1h-1zM22 7h3v1h-3zM27 7h2v1h-2zM30 7h1v1h-1zM32 7h1v1h-1zM1 8h1v1h-1zM3 8h2v1h-2zM6 8h1v1h-1zM12 8h2v1h-2zM16 8h1v1h-1zM21 8h1v1h-1zM23 8h1v1h-1zM25 8h1v1h-1zM27 8h2v1h-2zM31 8h1v1h-1zM33 8h1v1h-1zM35 8h1v1h-1zM38 8h3v1h-3zM0 9h1v1h-1zM3 9h3v1h-3zM8 9h1v1h-1zM10 9h3v1h-3zM14 9h2v1h-2zM17 9h1v1h-1zM19 9h4v1h-4zM24 9h3v1h-3zM28 9h2v1h-2zM36 9h1v1h-1zM40 9h1v1h-1zM0 10h1v1h-1zM2 10h1v1h-1zM5 10h2v1h-2zM8 10h2v1h-2zM11 10h1v1h-1zM13 10h2v1h-2zM16 10h2v1h-2zM21 10h2v1h-2zM24 10h1v1h-1zM26 10h4v1h-4zM31 10h1v1h-1zM33 10h3v1h-3zM39 10h2v1h-2zM1 11h1v1h-1zM3 11h4v1h-4zM8 11h1v1h-1zM11 11h2v1h-2zM14 11h5v1h-5zM24 11h1v1h-1zM26 11h1v1h-1zM29 11h1v1h-1zM34 11h1v1h-1zM40 11h1v1h-1zM1 12h5v1h-5zM8 12h1v1h-1zM11 12h1v1h-1zM15 12h1v1h-1zM21 12h1v1h-1zM24 12h7v1h-7zM33 12h1v1h-1zM39 12h1v1h-1zM1 13h1v1h-1zM3 13h4v1h-4zM8 13h1v1h-1zM10 13h1v1h-1zM13 13h2v1h-2zM17 13h1v1h-1zM19 13h5v1h-5zM25 13h1v1h-1zM28 13h1v1h-1zM31 13h1v1h-1zM33 13h2v1h-2zM36 13h1v1h-1zM40 13h1v1h-1zM3 14h1v1h-1zM5 14h3v1h-3zM9 14h2v1h-2zM12 14h2v1h-2zM15 14h1v1h-1zM21 14h2v1h-2zM26 14h2v1h-2zM33 14h2v1h-2zM38 14h3v1h-3zM0 15h1v1h-1zM2 15h1v1h-1zM4 15h2v1h-2zM9 15h4v1h-4zM15 15h2v1h-2zM20 15h3v1h-3zM24 15h1v1h-1zM27 15h1v1h-1zM31 15h3v1h-3zM35 15h2v1h-2zM38 15h1v1h-1zM40 15h1v1h-1zM1 16h2v1h-2zM4 16h2v1h-2zM8 16h3v1h-3zM12 16h2v1h-2zM19 16h1v1h-1zM21 16h3v1h-3zM26 16h7v1h-7zM38 16h1v1h-1zM0 17h3v1h-3zM8 17h1v1h-1zM11 17h2v1h-2zM15 17h1v1h-1zM17 17h1v1h-1zM20 17h2v1h-2zM25 17h2v1h-2zM29 17h1v1h-1zM34 17h1v1h-1zM5 18h3v1h-3zM10 18h5v1h-5zM16 18h3v1h-3zM21 18h3v1h-3zM26 18h5v1h-5zM33 18h4v1h-4zM38 18h1v1h-1zM0 19h2v1h-2zM4 19h1v1h-1zM7 19h3v1h-3zM12 19h1v1h-1zM14 19h2v1h-2zM18 19h4v1h-4zM25 19h4v1h-4zM30 19h1v1h-1zM33 19h1v1h-1zM35 19h1v1h-1zM37 19h1v1h-1zM0 20h2v1h-2zM3 20h3v1h-3zM9 20h1v1h-1zM11 20h1v1h-1zM13 20h1v1h-1zM15 20h1v1h-1zM18 20h1v1h-1zM20 20h5v1h-5zM26 20h1v1h-1zM28 20h3v1h-3zM34 20h2v1h-2zM37 20h1v1h-1zM39 20h2v1h-2zM2 21h1v1h-1zM4 21h2v1h-2zM7 21h3v1h-3zM11 21h2v1h-2zM14 21h1v1h-1zM18 21h1v1h-1zM20 21h3v1h-3zM25 21h2v1h-2zM29 21h6v1h-6zM36 21h2v1h-2zM0 22h5v1h-5zM10 22h3v1h-3zM14 22h3v1h-3zM20 22h1v1h-1zM24 22h3v1h-3zM29 22h1v1h-1zM32 22h1v1h-1zM35 22h3v1h-3zM40 22h1v1h-1zM1 23h3v1h-3zM5 23h1v1h-1zM10 23h1v1h-1zM15 23h1v1h-1zM17 23h1v1h-1zM19 23h1v1h-1zM22 23h1v1h-1zM24 23h3v1h-3zM30 23h1v1h-1zM33 23h1v1h-1zM36 23h5v1h-5zM1 24h3v1h-3zM5 24h1v1h-1zM7 24h1v1h-1zM9 24h1v1h-1zM12 24h2v1h-2zM18 24h1v1h-1zM22 24h2v1h-2zM28 24h1v1h-1zM30 24h2v1h-2zM37 24h1v1h-1zM39 24h2v1h-2zM0 25h4v1h-4zM6 25h5v1h-5zM15 25h1v1h-1zM17 25h1v1h-1zM21 25h1v1h-1zM23 25h1v1h-1zM26 25h5v1h-5zM33 25h2v1h-2zM36 25h2v1h-2zM39 25h2v1h-2zM2 26h3v1h-3zM7 26h1v1h-1zM9 26h3v1h-3zM14 26h1v1h-1zM16 26h1v1h-1zM18 26h2v1h-2zM21 26h1v1h-1zM25 26h1v1h-1zM28 26h4v1h-4zM33 26h3v1h-3zM38 26h1v1h-1zM1 27h2v1h-2zM5 27h1v1h-1zM7 27h1v1h-1zM9 27h1v1h-1zM12 27h1v1h-1zM14 27h2v1h-2zM17 27h2v1h-2zM20 27h2v1h-2zM23 27h1v1h-1zM26 27h2v1h-2zM29 27h1v1h-1zM31 27h2v1h-2zM35 27h1v1h-1zM38 27h2v1h-2zM3 28h1v1h-1zM5 28h1v1h-1zM7 28h2v1h-2zM12 28h3v1h-3zM16 28h2v1h-2zM22 28h7v1h-7zM30 28h1v1h-1zM35 28h5v1h-5zM1 29h1v1h-1zM3 29h1v1h-1zM5 29h3v1h-3zM11 29h4v1h-4zM16 29h2v1h-2zM20 29h2v1h-2zM23 29h2v1h-2zM26 29h6v1h-6zM35 29h2v1h-2zM38 29h2v1h-2zM0 30h2v1h-2zM4 30h2v1h-2zM7 30h2v1h-2zM13 30h2v1h-2zM16 30h1v1h-1zM18 30h3v1h-3zM22 30h6v1h-6zM30 30h11v1h-11zM2 31h3v1h-3zM6 31h1v1h-1zM10 31h4v1h-4zM15 31h1v1h-1zM17 31h6v1h-6zM24 31h3v1h-3zM28 31h1v1h-1zM30 31h1v1h-1zM34 31h2v1h-2zM37 31h2v1h-2zM40 31h1v1h-1zM0 32h5v1h-5zM9 32h1v1h-1zM12 32h1v1h-1zM17 32h1v1h-1zM19 32h12v1h-12zM32 32h1v1h-1zM34 32h3v1h-3zM8 33h5v1h-5zM15 33h1v1h-1zM17 33h2v1h-2zM21 33h1v1h-1zM27 33h4v1h-4zM34 33h5v1h-5zM40 33h1v1h-1zM0 34h7v1h-7zM8 34h1v1h-1zM15 34h2v1h-2zM18 34h1v1h-1zM24 34h1v1h-1zM26 34h1v1h-1zM28 34h13v1h-13zM0 35h1v1h-1zM6 35h1v1h-1zM8 35h3v1h-3zM12 35h1v1h-1zM14 35h1v1h-1zM16 35h2v1h-2zM22 35h1v1h-1zM27 35h2v1h-2zM30 35h3v1h-3zM36 35h1v1h-1zM38 35h1v1h-1zM40 35h1v1h-1zM0 36h1v1h-1zM2 36h3v1h-3zM6 36h1v1h-1zM9 36h3v1h-3zM13 36h3v1h-3zM18 36h2v1h-2zM23 36h1v1h-1zM27 36h3v1h-3zM31 36h5v1h-5zM37 36h1v1h-1zM39 36h2v1h-2zM0 37h1v1h-1zM2 37h3v1h-3zM6 37h1v1h-1zM8 37h2v1h-2zM11 37h1v1h-1zM13 37h2v1h-2zM16 37h2v1h-2zM21 37h1v1h-1zM25 37h1v1h-1zM28 37h6v1h-6zM35 37h4v1h-4zM40 37h1v1h-1zM0 38h1v1h-1zM2 38h3v1h-3zM6 38h1v1h-1zM9 38h1v1h-1zM11 38h1v1h-1zM13 38h1v1h-1zM15 38h1v1h-1zM17 38h3v1h-3zM22 38h1v1h-1zM24 38h2v1h-2zM27 38h3v1h-3zM31 38h1v1h-1zM35 38h6v1h-6zM0 39h1v1h-1zM6 39h1v1h-1zM9 39h1v1h-1zM11 39h1v1h-1zM13 39h2v1h-2zM16 39h2v1h-2zM20 39h3v1h-3zM24 39h1v1h-1zM26 39h1v1h-1zM28 39h1v1h-1zM33 39h1v1h-1zM35 39h1v1h-1zM38 39h1v1h-1zM40 39h1v1h-1zM0 40h7v1h-7zM11 40h2v1h-2zM15 40h1v1h-1zM18 40h1v1h-1zM20 40h1v1h-1zM22 40h2v1h-2zM29 40h1v1h-1zM31 40h1v1h-1zM34 40h1v1h-1zM36 40h1v1h-1zM39 40h2v1h-2z" fill="#111"/></g><circle cx="45" cy="45" r="12" fill="#fff"/><text x="38" y="50" font-size="14" font-weight="bold" font-style="italic" fill="#2f95e0">P</text><text x="46" y="50" font-size="14" font-weight="bold" font-style="italic" fill="#f0a830">A</text></svg>
 <div class="abs" style="left:1146px;top:279px;font-size:16px;color:#fff;line-height:22px">官方微信</div>
 <div class="abs" style="left:0;top:333px;width:1240px;height:1px;background:#5073c8"></div>
</div>
</body></html>
